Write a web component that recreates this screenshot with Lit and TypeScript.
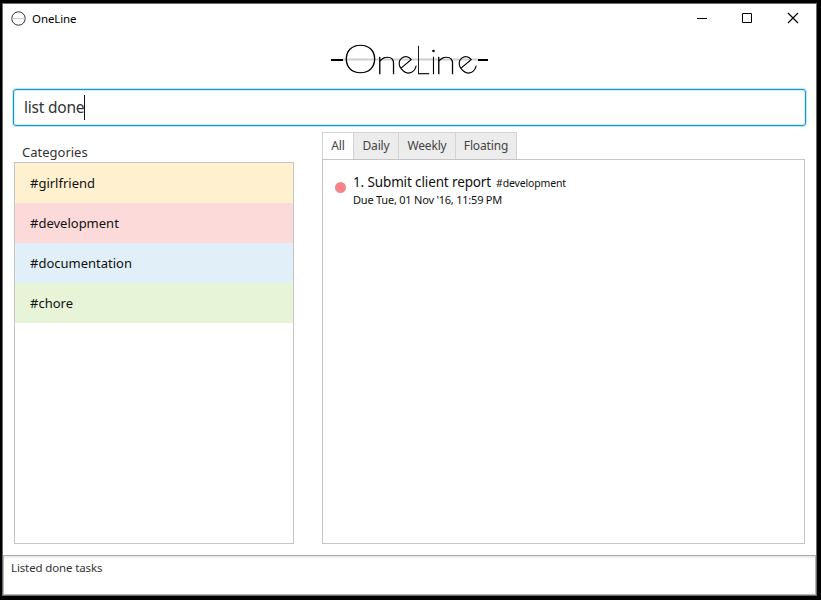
import { LitElement, html, css, svg } from "lit";
import { customElement, state } from "lit/decorators.js";
import { classMap } from "lit/directives/class-map.js";

@customElement("one-logo")
class OneLogo extends LitElement {
  static styles = css`
    :host { display: block; width: 160px; height: 40px; }
    svg { display: block; overflow: visible; will-change: transform; }
    text { font-family: Lato, "Open Sans", sans-serif; font-weight: 100; fill: #000; stroke: #000; stroke-width: 0.7; }
    .cap { font-size: 40px; }
    .round { font-size: 39.5px; }
    .low { font-size: 33.5px; }
    .bowl { font-size: 35px; }
  `;
  render() {
    return html`<svg width="160" height="40" viewBox="330 40 160 40">
      <path d="M343 59.5H478" stroke="#cfcfcf" stroke-width="2" />
      <path d="M331 60H343M478 60H488" stroke="#000" stroke-width="2" />
      ${svg`<text class="round" transform="translate(343 73.2) scale(1.13 1)">O</text>
      <text class="low" transform="translate(376 73.5) scale(1.16 1)">n</text>
      <text class="bowl" transform="translate(405.4 77.6) rotate(-40)">e</text>
      <text class="cap" transform="translate(415 73.5) scale(.72 1)">L</text>
      <text class="low" x="430" y="73.5">i</text>
      <text class="low" transform="translate(435 73.5) scale(1.16 1)">n</text>
      <text class="bowl" transform="translate(465.4 77.6) rotate(-40)">e</text>`}
    </svg>`;
  }
}

@customElement("app-root")
class AppRoot extends LitElement {
  @state() private tab = "All";
  private tabs = ["All", "Daily", "Weekly", "Floating"];
  private categories = [
    ["girlfriend", "yellow"],
    ["development", "red"],
    ["documentation", "blue"],
    ["chore", "green"],
  ];

  static styles = css`
    :host { display: block; width: 821px; height: 600px; background: #000; box-sizing: border-box; padding: 3px 4px 4px 2px; font-family: "Noto Sans", "Open Sans", sans-serif; color: #333; }
    * { box-sizing: border-box; }
    .window { height: 593px; background: #fff; border: 1px solid #6b6b6b; display: flex; flex-direction: column; }
    .titlebar { height: 29px; display: flex; align-items: center; padding-left: 8px; color: #000; flex: none; }
    .title { font-size: 11.5px; margin-left: 6px; flex: 1; letter-spacing: -0.1px; }
    .controls { display: flex; margin-right: 1px; }
    .controls svg { display: block; width: 45px; height: 29px; }
    .controls svg:last-child { width: 46px; }
    .brand { display: flex; justify-content: center; height: 40px; margin-top: 7px; flex: none; }
    .command { flex: none; height: 37px; margin: 9px 10px 0 10px; border: 1px solid #2a8fba; border-radius: 3px; box-shadow: 0 0 0 1px #b5ecfb, inset 0 0 0 1px #c8f3ff; display: flex; align-items: center; padding-left: 10px; font-size: 15.5px; letter-spacing: -0.22px; color: #333; }
    .typed { padding-bottom: 2px; }
    .caret { width: 1px; height: 25px; background: #111; }
    .body { flex: 1; min-height: 0; display: flex; padding: 6px 11px 11px 11px; gap: 28px; }
    .left { width: 280px; display: flex; flex-direction: column; }
    .heading { height: 30px; padding: 10px 0 0 8px; font-size: 13px; line-height: 20px; flex: none; }
    .list { flex: 1; border: 1px solid #c4c4c4; }
    .category { height: 40px; padding-left: 15px; line-height: 40px; font-size: 13px; color: #111; }
    .yellow { background: #fff0cf; }
    .red { background: #fddada; }
    .blue { background: #e0eff8; }
    .green { background: #e7f4d7; }
    .right { flex: 1; display: flex; flex-direction: column; }
    .tabs { display: flex; height: 27px; flex: none; }
    .tab { height: 27px; border: 1px solid #d3d3d3; border-left-width: 0; background: #ececec; font-size: 12px; letter-spacing: -0.15px; line-height: 26px; text-align: center; width: 60px; border-bottom: 0; color: #444; }
    .tab:first-child { width: 32px; border-left-width: 1px; }
    .tab:nth-child(2) { width: 45px; }
    .tab:nth-child(3) { width: 57px; }
    .tab:nth-child(4) { width: 61px; }
    .selected { background: #fff; }
    .tasks { flex: 1; border: 1px solid #c4c4c4; padding: 12px; color: #111; }
    .task { display: flex; align-items: center; height: 40px; padding-top: 1px; }
    .dot { width: 11px; height: 11px; border-radius: 50%; background: #f88388; margin: -10px 7px 0 0; }
    .name { display: flex; align-items: baseline; height: 19px; line-height: 21px; font-size: 13.5px; letter-spacing: -0.13px; gap: 5px; }
    .tag { font-size: 10.5px; letter-spacing: -0.15px; }
    .due { font-size: 11px; letter-spacing: -0.22px; line-height: 17px; height: 22px; }
    .status { height: 40px; flex: none; border: 1px solid #b5b5b5; border-top-color: #aaa; box-shadow: inset 0 3px 2px -1px #e9e9e9; padding: 3px 0 0 7px; font-size: 11.5px; letter-spacing: -0.13px; line-height: 18px; }
  `;

  render() {
    return html`<div class="window">
      <header class="titlebar">
        <svg width="15" height="15" viewBox="0 0 15 15" fill="none"><circle cx="7.5" cy="7.5" r="6.7" stroke="#333" /><path d="M1 7.5H14" stroke="#ccc" /></svg>
        <span class="title">OneLine</span>
        <div class="controls">
          <svg viewBox="0 0 45 29" stroke="#000"><path d="M18 14.5H28" /></svg>
          <svg viewBox="0 0 45 29" stroke="#000" fill="none"><path d="M18.5 9.5h9v9h-9z" /></svg>
          <svg viewBox="0 0 46 29" stroke="#000" stroke-width="1.2"><path d="M19 9l10 10M29 9l-10 10" /></svg>
        </div>
      </header>
      <div class="brand"><one-logo></one-logo></div>
      <div class="command"><span class="typed">list done</span><span class="caret"></span></div>
      <main class="body">
        <section class="left">
          <div class="heading"><span>Categories</span></div>
          <div class="list">${this.categories.map(([n, c]) => html`<div class="category ${c}"><span>#${n}</span></div>`)}</div>
        </section>
        <section class="right">
          <nav class="tabs">${this.tabs.map((t) => html`<div class=${classMap({ tab: true, selected: t === this.tab })} @click=${() => (this.tab = t)}>${t}</div>`)}</nav>
          <div class="tasks">
            <div class="task"><span class="dot"></span>
              <div><div class="name"><span>1. Submit client report</span><span class="tag">#development</span></div>
              <div class="due"><span>Due Tue, 01 Nov '16, 11:59 PM</span></div></div>
            </div>
          </div>
        </section>
      </main>
      <footer class="status"><span>Listed done tasks</span></footer>
    </div>`;
  }
}
